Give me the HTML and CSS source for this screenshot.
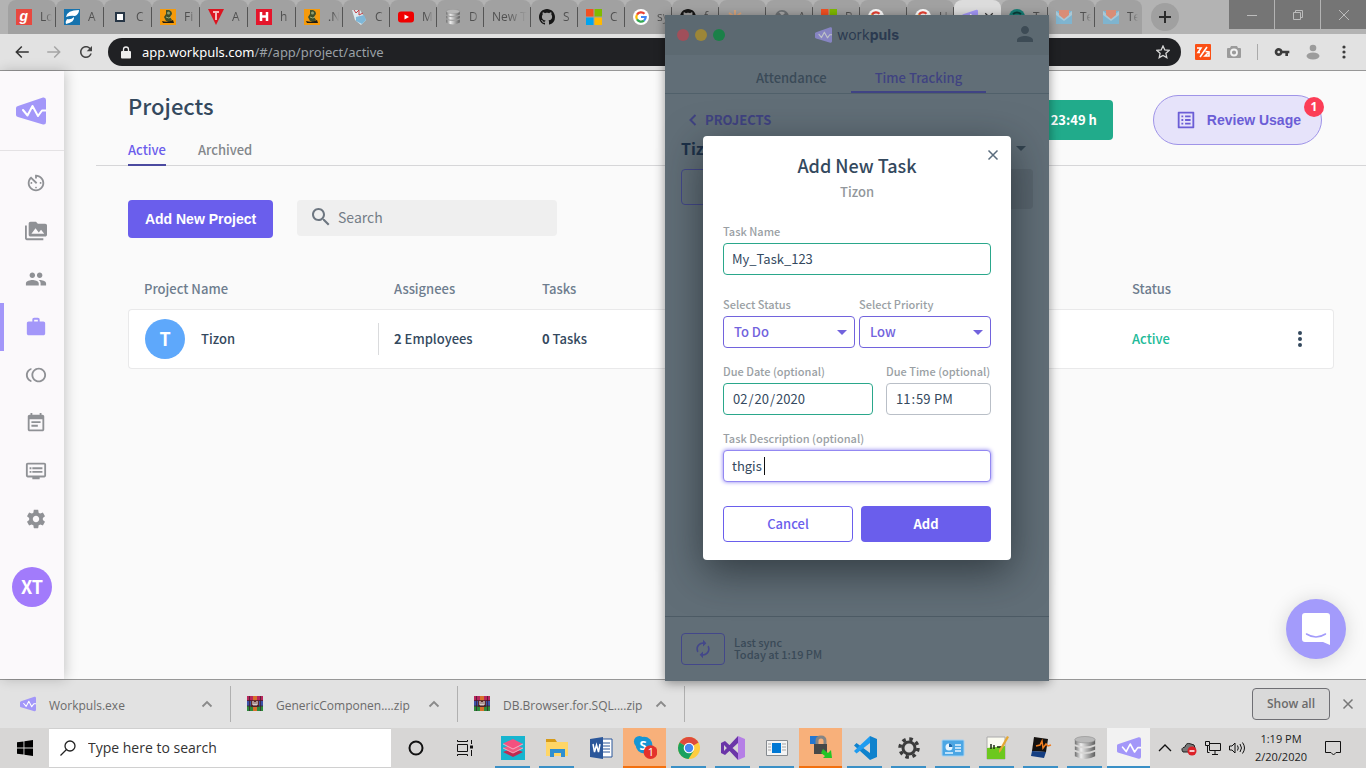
FILE: index.html
```html
<!DOCTYPE html>
<html lang="en">
<head>
<meta charset="utf-8">
<title>Workpuls - Projects</title>
<link rel="stylesheet" href="styles.css">
</head>
<body>
<svg class="sprite" width="0" height="0" aria-hidden="true">
  <symbol id="logo" viewBox="0 0 30 28"><path d="M2 9 27 0.5Q30 0 30 3V25Q30 28 27 27.500L2 20Q0 19.500 0 18V11Q0 9.500 2 9Z" fill="#a397f9"/><path d="M7 13 11.500 18.500 16.500 9 22 19 26 13.500H30" fill="none" stroke="#fff" stroke-width="2" stroke-linejoin="round" stroke-linecap="round"/></symbol>
  <symbol id="google" viewBox="0 0 16 16"><circle cx="8" cy="8" r="8" fill="#fff"/><g fill="none" stroke-width="2.200"><path d="M11.500 4.800A4.700 4.700 0 0 0 4 5.600" stroke="#ea4335"/><path d="M4 5.600A4.700 4.700 0 0 0 4 10.400" stroke="#fbbc05"/><path d="M4 10.400A4.700 4.700 0 0 0 11 11.600" stroke="#34a853"/><path d="M11 11.600A4.700 4.700 0 0 0 12.700 8H8" stroke="#4285f4"/></g></symbol>
  <symbol id="microsoft" viewBox="0 0 16 16"><path d="M0 0h7.500v7.500H0z" fill="#f25022"/><path d="M8.500 0H16v7.500H8.500z" fill="#7fba00"/><path d="M0 8.500h7.500V16H0z" fill="#00a4ef"/><path d="M8.500 8.500H16V16H8.500z" fill="#ffb900"/></symbol>
  <symbol id="github" viewBox="0 0 16 16"><path d="M8 0C3.58 0 0 3.58 0 8c0 3.54 2.29 6.53 5.47 7.59.4.07.55-.17.55-.38 0-.19-.01-.82-.01-1.49-2.01.37-2.53-.49-2.69-.94-.09-.23-.48-.94-.82-1.13-.28-.15-.68-.52-.01-.53.63-.01 1.08.58 1.23.82.72 1.21 1.87.87 2.33.66.07-.52.28-.87.51-1.07-1.78-.2-3.64-.89-3.64-3.95 0-.87.31-1.59.82-2.15-.08-.2-.36-1.02.08-2.12 0 0 .67-.21 2.2.82.64-.18 1.32-.27 2-.27s1.36.09 2 .27c1.53-1.04 2.2-.82 2.2-.82.44 1.1.16 1.92.08 2.12.51.56.82 1.27.82 2.15 0 3.07-1.87 3.75-3.65 3.95.29.25.54.73.54 1.48 0 1.07-.01 1.93-.01 2.2 0 .21.15.46.55.38A8.01 8.01 0 0016 8c0-4.42-3.58-8-8-8z" fill="#161616"/></symbol>
  <symbol id="figure" viewBox="0 0 16 16"><path d="M0 0h16v16H0z" fill="#f59a0b"/><path d="M6 1h3q3 1 3 4l-2 3 2 3-3 2-3-1-2-4 2-3z" fill="#40502a"/><path d="M2 12q6 2 11-1l1 3H3z" fill="#1c1c14"/><circle cx="8.500" cy="4" r="1.500" fill="#8fa070"/><path d="M6 8q3 2 5 0" stroke="#9cae7c" fill="none"/></symbol>
  <symbol id="gmail" viewBox="0 0 16 16"><path d="M0 2h16v13H0z" fill="#7fb4cf"/><path d="M0 2 8 9l8-7v4l-8 6-8-6z" fill="#a8c8d6"/><path d="M3 1h10v5L8 10 3 6z" fill="#d98d76"/></symbol>
  <symbol id="database" viewBox="0 0 24 26"><linearGradient id="metal"><stop offset="0" stop-color="#6d6d6d"/><stop offset=".3" stop-color="#eee"/><stop offset="1" stop-color="#5e5e5e"/></linearGradient><path d="M1 4v5q11 5 22 0V4zM1 11v4q11 5 22 0v-4q-11 5-22 0zM1 17v5q11 6 22 0v-5q-11 5-22 0z" fill="url(#metal)"/><ellipse cx="12" cy="4" rx="11" ry="3.500" fill="#b9b9b9" stroke="#888" stroke-width=".6"/></symbol>
  <symbol id="rar" viewBox="0 0 16 16"><path d="M0 0h16v5H0z" fill="#b8265c"/><path d="M0 5h16v5H0z" fill="#3c51a8"/><path d="M0 10h16v5H0z" fill="#2d8a3a"/><path d="M6 0h4v15H6z" fill="#d8702a"/><path d="M4 5h8v6H4z" fill="#5a2b2b"/><path d="M6 5v4h4V5M8 6v3" stroke="#fff" fill="none"/><path d="M0 4.500h16M0 10h16M2.500 0v15M13.500 0v15" stroke="#3b1a2a" stroke-width=".7"/></symbol>
  <symbol id="gear" viewBox="0 0 24 24"><path d="M19.430 12.980c.04-.32.07-.64.07-.98s-.03-.66-.07-.98l2.110-1.650c.19-.15.24-.42.12-.64l-2-3.460c-.12-.22-.39-.3-.61-.22l-2.490 1c-.52-.4-1.080-.73-1.690-.98l-.38-2.650C14.460 2.180 14.250 2 14 2h-4c-.25 0-.46.18-.49.42l-.38 2.650c-.61.25-1.170.59-1.690.98l-2.490-1c-.23-.09-.49 0-.61.22l-2 3.460c-.13.22-.07.49.12.64l2.110 1.650c-.04.32-.07.65-.07.98s.03.66.07.98l-2.110 1.650c-.19.15-.24.42-.12.64l2 3.460c.12.22.39.3.61.22l2.490-1c.52.4 1.080.73 1.690.98l.38 2.650c.03.24.24.42.49.42h4c.25 0 .46-.18.49-.42l.38-2.650c.61-.25 1.170-.59 1.690-.98l2.490 1c.23.09.49 0 .61-.22l2-3.460c.12-.22.07-.49-.12-.64l-2.110-1.650zM12 15.500c-1.930 0-3.500-1.570-3.500-3.500s1.570-3.500 3.500-3.500 3.500 1.570 3.500 3.500-1.570 3.500-3.500 3.500z"/></symbol>
  <symbol id="person" viewBox="0 0 24 24"><path d="M12 12c2.210 0 4-1.790 4-4s-1.790-4-4-4-4 1.790-4 4 1.790 4 4 4zm0 2c-2.670 0-8 1.340-8 4v2h16v-2c0-2.660-5.330-4-8-4z"/></symbol>
  <symbol id="chevron" viewBox="0 0 12 12"><path d="M1.500 8.500 6 4l4.500 4.500" fill="none" stroke="currentColor" stroke-width="1.800"/></symbol>
  <symbol id="cross" viewBox="0 0 12 12"><path d="M1.500 1.500l9 9M10.500 1.500l-9 9" fill="none" stroke="currentColor" stroke-width="1.500"/></symbol>
</svg>

<header class="browser-head">
  <div class="tabstrip">
    <div class="tabs">
      <div class="tab wide"><svg viewBox="0 0 16 16"><path d="M0 0h16v16H0z" fill="#e8483f"/><text x="3.500" y="12" font-size="14" font-weight="bold" font-style="italic" font-family="Liberation Sans" fill="#fff">g</text></svg><span>Lo</span></div>
      <div class="tab wide"><svg viewBox="0 0 16 16"><path d="M0 0h16v16H0z" fill="#1673ae"/><path d="M2 8Q3 1 15 1q0 4-4 6-4-1-9 1z" fill="#fff"/><path d="M10 8q1 5-8 7-1-2 1-5 4 1 7-2z" fill="#fff"/></svg><span>A</span></div>
      <div class="tab wide"><svg viewBox="0 0 16 16"><path d="M4 4h8v8H4z" fill="#fff" stroke="#263545" stroke-width="2"/></svg><span>C</span></div>
      <div class="tab wide"><svg><use href="#figure"/></svg><span>Fi</span></div>
      <div class="tab wide"><svg viewBox="0 0 16 16"><path d="M0 0h16L8 16z" fill="#dc1420"/><path d="M5 3h6M8 3v8" stroke="#f6b7b9" stroke-width="2"/></svg><span>A</span></div>
      <div class="tab wide"><svg viewBox="0 0 16 16"><path d="M0 0h16v16H0z" fill="#e5152b"/><path d="M5 3v9M11 3v9M5 7.500h6" stroke="#fff" stroke-width="2.500"/></svg><span>h</span></div>
      <div class="tab"><svg><use href="#figure"/></svg><span>.N</span></div>
      <div class="tab"><svg viewBox="0 0 16 16"><path d="M1 1h8l3 5 3 5-5 5-6-5z" fill="#dce8ee"/><path d="M3 1l2 3 3-3v5l4-2" stroke="#c43e42" fill="none"/><path d="M5 8l8-2 2 5-4 4-6-3z" fill="#7eb7d8"/></svg><span>C</span></div>
      <div class="tab"><svg viewBox="0 0 16 16"><rect y="2.500" width="16" height="11" rx="3" fill="#f00000"/><path d="M6.500 5.500v5L11 8z" fill="#fff"/></svg><span>M</span></div>
      <div class="tab"><svg><use href="#database"/></svg><span>D</span></div>
      <div class="tab"><span>New Tab</span></div>
      <div class="tab"><svg><use href="#github"/></svg><span>S</span></div>
      <div class="tab"><svg><use href="#microsoft"/></svg><span>C</span></div>
      <div class="tab"><svg><use href="#google"/></svg><span>sy</span></div>
      <div class="tab"><svg><use href="#github"/></svg><span>f</span></div>
      <div class="tab"><svg viewBox="0 0 16 16"><path d="M8 1v14M2 4l12 8M14 4 2 12" stroke="#d9a47a" stroke-width="2"/></svg><span></span></div>
      <div class="tab"><svg viewBox="0 0 16 16"><circle cx="8" cy="8" r="7" fill="#6c7073"/><path d="M5 3q4-1 6 1l-3 3z" fill="#a8a8a8"/></svg><span>A</span></div>
      <div class="tab"><svg><use href="#microsoft"/></svg><span>B</span></div>
      <div class="tab"><svg><use href="#google"/></svg><span></span></div>
      <div class="tab"><svg><use href="#google"/></svg><span>U</span></div>
      <div class="tab current"><svg><use href="#logo"/></svg><svg class="tab-close"><use href="#cross"/></svg></div>
      <div class="tab"><svg viewBox="0 0 16 16"><circle cx="8" cy="8" r="8" fill="#167d75"/><path d="M4 5q4-3 8 0" stroke="#083b38" stroke-width="2" fill="none"/></svg><span>T</span></div>
      <div class="tab"><svg><use href="#gmail"/></svg><span>Te</span></div>
      <div class="tab last"><svg><use href="#gmail"/></svg><span>Te</span></div>
    </div>
    <button class="newtab" aria-label="New tab"><svg viewBox="0 0 12 12"><path d="M6 0v12M0 6h12" stroke="#2c2c2c" stroke-width="2"/></svg></button>
    <div class="winctl">
      <button aria-label="Minimize"><svg viewBox="0 0 12 12"><path d="M1 6.500h10"/></svg></button>
      <button aria-label="Restore"><svg viewBox="0 0 12 12"><path d="M1.500 3.500h7v7h-7zM3.500 3V1.500h7v7H9"/></svg></button>
      <button aria-label="Close"><svg viewBox="0 0 12 12"><path d="M1 1l10 10M11 1 1 11"/></svg></button>
    </div>
  </div>
  <div class="toolbar">
    <div class="navbtns">
      <button aria-label="Back"><svg viewBox="0 0 24 24" fill="#333"><path d="M21 11H6.830l5.590-5.590L11 4l-8 8 8 8 1.410-1.410L6.830 13H21z"/></svg></button>
      <button aria-label="Forward"><svg viewBox="0 0 24 24" fill="#a5a5a5"><path d="M3 11h14.170l-5.590-5.590L13 4l8 8-8 8-1.410-1.410L17.170 13H3z"/></svg></button>
      <button aria-label="Reload"><svg viewBox="0 0 24 24" fill="#444"><path d="M17.650 6.350C16.200 4.900 14.210 4 12 4c-4.420 0-7.990 3.580-7.990 8s3.570 8 7.990 8c3.730 0 6.840-2.550 7.730-6h-2.080c-.82 2.330-3.040 4-5.650 4-3.310 0-6-2.690-6-6s2.690-6 6-6c1.660 0 3.140.69 4.220 1.780L13 11h7V4l-2.350 2.350z"/></svg></button>
    </div>
    <div class="omnibox">
      <svg class="lock" viewBox="0 0 10 13"><path d="M1 5h8q1 0 1 1v5.500q0 1-1 1H1q-1 0-1-1V6q0-1 1-1z" fill="#eee"/><path d="M2.500 5V3.500a2.500 2.500 0 0 1 5 0V5" fill="none" stroke="#eee" stroke-width="1.300"/></svg>
      <span class="url"><b>app.workpuls.com</b>/#/app/project/active</span>
      <svg class="star" viewBox="0 0 14 14"><path d="M7 1l1.800 4 4.300.4-3.200 2.900.9 4.300L7 10.400l-3.800 2.200.9-4.300L.9 5.400 5.200 5z" fill="none" stroke="#d8d8d8" stroke-width="1.300"/></svg>
    </div>
    <div class="extensions">
      <svg viewBox="0 0 16 16"><rect width="16" height="16" rx="1" fill="#fb4f14"/><path d="M2 4h4L3 8.500h2M12 3 5 13M10.500 7.500 14 8v4h-4l3-3" fill="none" stroke="#fff" stroke-width="1.600"/></svg>
      <svg viewBox="0 0 16 16"><path d="M5 2h6l1 2h2q1 0 1 1v8q0 1-1 1H2q-1 0-1-1V5q0-1 1-1h2z" fill="#9b9b9b"/><circle cx="8" cy="8.500" r="3" fill="none" stroke="#f2f2f2" stroke-width="1.800"/></svg>
      <i class="ext-sep"></i>
      <svg viewBox="0 0 24 24" fill="#3c3c3c"><path d="M12.650 10C11.830 7.670 9.610 6 7 6c-3.310 0-6 2.690-6 6s2.690 6 6 6c2.610 0 4.830-1.670 5.650-4H17v4h4v-4h2v-4H12.650zM7 14c-1.100 0-2-.9-2-2s.9-2 2-2 2 .9 2 2-.9 2-2 2z"/></svg>
      <svg viewBox="0 0 16 16" fill="#9c9c9c"><circle cx="8" cy="4" r="3.300"/><ellipse cx="8" cy="12" rx="6.500" ry="3.500"/></svg>
      <svg viewBox="0 0 16 16" fill="#3c3c3c"><circle cx="8" cy="3" r="1.600"/><circle cx="8" cy="8" r="1.600"/><circle cx="8" cy="13" r="1.600"/></svg>
    </div>
  </div>
</header>

<div class="page">
  <nav class="sidebar" aria-label="Main">
    <a class="brand" href="#" aria-label="Workpuls"><svg><use href="#logo"/></svg></a>
    <a href="#" aria-label="Timer"><svg viewBox="0 0 24 24"><path d="M11 17c0 .55.45 1 1 1s1-.45 1-1-.45-1-1-1-1 .45-1 1zm0-14v4h2V5.080c3.390.49 6 3.390 6 6.920 0 3.870-3.130 7-7 7s-7-3.130-7-7c0-1.680.59-3.220 1.580-4.420L12 13l1.410-1.410-6.800-6.800v.02C4.420 6.450 3 9.050 3 12c0 4.970 4.020 9 9 9 4.970 0 9-4.030 9-9s-4.030-9-9-9h-1zm7 9c0-.55-.45-1-1-1s-1 .45-1 1 .45 1 1 1 1-.45 1-1zM6 12c0 .55.45 1 1 1s1-.45 1-1-.45-1-1-1-1 .45-1 1z"/></svg></a>
    <a href="#" aria-label="Screenshots"><svg viewBox="0 0 24 24"><path d="M2 6H0v5h.01L0 20c0 1.100.9 2 2 2h18v-2H2V6zm20-2h-8l-2-2H6c-1.100 0-1.990.9-1.990 2L4 16c0 1.100.9 2 2 2h16c1.100 0 2-.9 2-2V6c0-1.100-.9-2-2-2zM7 15l4.500-6 3.500 4.510 2.500-3.010L21 15H7z"/></svg></a>
    <a href="#" aria-label="Employees"><svg viewBox="0 0 24 24"><path d="M16 11c1.660 0 2.990-1.340 2.990-3S17.660 5 16 5c-1.660 0-3 1.340-3 3s1.340 3 3 3zm-8 0c1.660 0 2.990-1.340 2.990-3S9.660 5 8 5C6.340 5 5 6.340 5 8s1.340 3 3 3zm0 2c-2.330 0-7 1.170-7 3.500V19h14v-2.500c0-2.330-4.670-3.500-7-3.500zm8 0c-.29 0-.62.02-.97.05 1.160.84 1.970 1.970 1.970 3.450V19h6v-2.500c0-2.330-4.670-3.500-7-3.500z"/></svg></a>
    <a class="on" href="#" aria-label="Projects"><svg viewBox="0 0 24 24"><path d="M20 6h-4V4c0-1.110-.89-2-2-2h-4c-1.110 0-2 .89-2 2v2H4c-1.110 0-1.990.89-1.990 2L2 19c0 1.110.89 2 2 2h16c1.110 0 2-.89 2-2V8c0-1.110-.89-2-2-2zm-6 0h-4V4h4v2z"/></svg></a>
    <a href="#" aria-label="Payroll"><svg viewBox="0 0 24 24"><path d="M15 4c-4.420 0-8 3.580-8 8s3.580 8 8 8 8-3.580 8-8-3.580-8-8-8zm0 14c-3.310 0-6-2.690-6-6s2.690-6 6-6 6 2.690 6 6-2.690 6-6 6zM3 12c0-2.610 1.670-4.830 4-5.650V4.260C3.550 5.150 1 8.270 1 12s2.550 6.850 6 7.740v-2.090c-2.330-.82-4-3.040-4-5.650z"/></svg></a>
    <a href="#" aria-label="Calendar"><svg viewBox="0 0 24 24"><path d="M17 10H7v2h10v-2zm2-7h-1V1h-2v2H8V1H6v2H5c-1.110 0-1.990.9-1.990 2L3 19c0 1.100.89 2 2 2h14c1.100 0 2-.9 2-2V5c0-1.100-.9-2-2-2zm0 16H5V8h14v11zm-5-5H7v2h7v-2z"/></svg></a>
    <a href="#" aria-label="Reports"><svg viewBox="0 0 24 24"><path d="M21 3H3c-1.100 0-2 .9-2 2v12c0 1.100.9 2 2 2h5v2h8v-2h5c1.100 0 1.990-.9 1.990-2L23 5c0-1.100-.9-2-2-2zm0 14H3V5h18v12zm-2-9H8v2h11V8zm0 4H8v2h11v-2zM7 8H5v2h2V8zm0 4H5v2h2v-2z"/></svg></a>
    <a href="#" aria-label="Settings"><svg><use href="#gear"/></svg></a>
    <span class="avatar user">XT</span>
  </nav>

  <main class="main">
    <div class="topbar">
      <div>
        <h1>Projects</h1>
        <div class="subtabs"><a class="on" href="#">Active</a><a href="#">Archived</a></div>
      </div>
      <div class="actions">
        <button class="hours">23:49 h</button>
        <button class="review"><svg viewBox="0 0 24 24"><path d="M19 5v14H5V5h14m1.100-2H3.900c-.5 0-.9.4-.9.9v16.200c0 .4.4.9.9.9h16.200c.4 0 .9-.5.9-.9V3.900c0-.5-.5-.9-.9-.9zM11 7h6v2h-6V7zm0 4h6v2h-6v-2zm0 4h6v2h-6zM7 7h2v2H7zm0 4h2v2H7zm0 4h2v2H7z"/></svg>Review Usage<span class="badge">1</span></button>
      </div>
    </div>
    <div class="content">
      <div class="tools">
        <button class="primary add-project">Add New Project</button>
        <label class="search"><svg viewBox="0 0 24 24"><path d="M15.500 14h-.79l-.28-.27C15.410 12.590 16 11.110 16 9.500 16 5.910 13.090 3 9.500 3S3 5.910 3 9.500 5.910 16 9.500 16c1.610 0 3.090-.59 4.230-1.570l.27.28v.79l5 4.990L20.490 19l-4.990-5zm-6 0C7.010 14 5 11.990 5 9.500S7.010 5 9.500 5 14 7.010 14 9.500 11.990 14 9.500 14z"/></svg><input type="text" placeholder="Search" aria-label="Search"></label>
      </div>
      <table class="projects">
        <thead><tr><th class="c-name">Project Name</th><th class="c-people">Assignees</th><th>Tasks</th><th class="c-status">Status</th><th class="c-more"></th></tr></thead>
        <tbody><tr>
          <td><div class="project"><span class="avatar">T</span>Tizon</div></td>
          <td><div class="people"><b>2</b> Employees</div></td>
          <td class="tasks"><b>0</b> Tasks</td>
          <td class="status">Active</td>
          <td><button class="more" aria-label="More"><svg viewBox="0 0 16 16"><circle cx="8" cy="2" r="2"/><circle cx="8" cy="8" r="2"/><circle cx="8" cy="14" r="2"/></svg></button></td>
        </tr></tbody>
      </table>
    </div>
  </main>
  <button class="chat" aria-label="Chat"><svg viewBox="0 0 28 32"><path d="M3 0h22q3 0 3 3v29l-7-3H3q-3 0-3-3V3q0-3 3-3z" fill="#fff"/><path d="M4.500 21q9.500 6 19 0" fill="none" stroke="#a39bfb" stroke-width="1.500" stroke-linecap="round"/></svg></button>
</div>

<footer class="downloads">
  <div class="download"><svg class="file"><use href="#logo"/></svg><span>Workpuls.exe</span><button aria-label="Options"><svg><use href="#chevron"/></svg></button></div>
  <div class="download"><svg class="file"><use href="#rar"/></svg><span>GenericComponen....zip</span><button aria-label="Options"><svg><use href="#chevron"/></svg></button></div>
  <div class="download"><svg class="file"><use href="#rar"/></svg><span>DB.Browser.for.SQL....zip</span><button aria-label="Options"><svg><use href="#chevron"/></svg></button></div>
  <button class="showall">Show all</button>
  <button class="closebar" aria-label="Close"><svg><use href="#cross"/></svg></button>
</footer>

<div class="taskbar">
  <button class="start" aria-label="Start"><svg viewBox="0 0 16 16"><path d="M0 2.300 6.500 1.400V7.600H0zM7.400 1.300 16 0v7.600H7.400zM0 8.400h6.500v6.200L0 13.700zM7.400 8.400H16V16l-8.600-1.300z"/></svg></button>
  <label class="tasksearch"><svg viewBox="0 0 16 16"><circle cx="10" cy="6" r="5" fill="none" stroke="#222" stroke-width="1.300"/><path d="M6.500 9.500.5 15.500" stroke="#222" stroke-width="1.300"/></svg><input type="text" placeholder="Type here to search" aria-label="Type here to search"></label>
  <button class="sys" aria-label="Cortana"><svg viewBox="0 0 16 16"><circle cx="8" cy="8" r="6.500" fill="none" stroke="#111" stroke-width="2"/></svg></button>
  <button class="sys" aria-label="Task view"><svg viewBox="0 0 16 16" fill="none" stroke="#111"><path d="M.5 4.500h10v7H.5zM.5 0v1.500h10V0M.5 16v-1.500h10V16M14.500 0v4M14.500 10v6"/><path d="M13 5.500h3v3h-3z" fill="#111" stroke="none"/></svg></button>
  <div class="apps">
    <button class="run" aria-label="Layers"><svg viewBox="0 0 24 24"><path d="M0 0h24v24H0z" fill="#17b5cf"/><path d="M2 16l10-4 10 4-10 5z" fill="#c02b52"/><path d="M2 12 12 8l10 4-10 5z" fill="#ef5b80"/><path d="M2 7.500 12 3l10 5-10 5z" fill="#f4517f"/><path d="M2 8l10 5 10-5M2 12l10 5 10-5" stroke="#fbc0d0" fill="none" stroke-width=".8"/></svg></button>
    <button class="run" aria-label="File Explorer"><svg viewBox="0 0 24 24"><path d="M1 3h9l2 3h10v7H1z" fill="#d79b17"/><path d="M1 6h22v14H1z" fill="#ffd666"/><path d="M5 13h15v8h-4v-4H9v4H5z" fill="#2f8fd0"/></svg></button>
    <button aria-label="Word"><svg viewBox="0 0 24 24"><path d="M12 3h11v18H12z" fill="#fff" stroke="#2b579a"/><path d="M14 7h7M14 10h7M14 13h7M14 16h7" stroke="#2b579a"/><path d="M1 3l13-2v22L1 21z" fill="#2b579a"/><path d="M4 8l1.500 8L7.500 9l2 7L11 8" fill="none" stroke="#fff" stroke-width="1.500"/></svg></button>
    <button class="alert" aria-label="Skype"><svg viewBox="0 0 26 26"><circle cx="12" cy="11" r="9" fill="#1696d4"/><circle cx="7" cy="7" r="6" fill="#1696d4"/><text x="7" y="16" font-size="14" font-weight="bold" font-family="Open Sans" fill="#fff">S</text><circle cx="19" cy="18.500" r="7.500" fill="#e4322b"/><text x="16" y="23" font-size="12" font-family="Open Sans" fill="#fff">1</text></svg></button>
    <button class="run" aria-label="Chrome"><svg viewBox="0 0 24 24"><circle cx="12" cy="12" r="11" fill="#ffcd40"/><path d="M12 12 2.500 6.500a11 11 0 0 1 19 0z" fill="#de4a3d"/><path d="M12 12 2.500 6.500A11 11 0 0 0 11.500 23l5-8z" fill="#1aa15f"/><circle cx="12" cy="12" r="5.300" fill="#fff"/><circle cx="12" cy="12" r="4.200" fill="#4688f1"/></svg></button>
    <button class="run" aria-label="Visual Studio"><svg viewBox="0 0 24 24"><path d="M17 0l7 3v18l-7 3z" fill="#b57fe6"/><path d="M17 0v7L4 19l-4-2V7l4-2 13 12v7L3 9v6z" fill="#6b35a8"/></svg></button>
    <button class="run" aria-label="Viewer"><svg viewBox="0 0 24 24"><path d="M1.500 4.500h21v15h-21z" fill="#f4f4f4" stroke="#868b90"/><path d="M7 7h9v10H7z" fill="#0078d4"/><path d="M3 8h3M3 11h3M3 14h3M17 8h4M17 11h4M17 14h4" stroke="#a5a5a5"/></svg></button>
    <button class="alert" aria-label="WinSCP"><svg viewBox="0 0 24 24"><path d="M1 1h8v8H1z" fill="#2576cf"/><path d="M8 11V6q0-4 4-4t4 4v5" fill="none" stroke="#858585" stroke-width="3"/><path d="M5 9h13v10H5z" fill="#484848"/><path d="M14 14l5 4 3-3 1 8h-9l2-2-4-3z" fill="#24c426"/></svg></button>
    <button class="run" aria-label="Visual Studio Code"><svg viewBox="0 0 24 24"><path d="M17 0l7 3v18l-7 3L1 9.500 3.500 7 17 17z" fill="#0f82cd"/><path d="M17 0v7L3.500 17.500 1 15z" fill="#1f9cf0"/></svg></button>
    <button class="run" aria-label="Settings"><svg viewBox="0 0 24 24"><circle cx="12" cy="12" r="6" fill="none" stroke="#3b3b3b" stroke-width="3"/><circle cx="12" cy="12" r="9" fill="none" stroke="#3b3b3b" stroke-width="3.500" stroke-dasharray="3.500 3.570"/></svg></button>
    <button class="run" aria-label="Control Panel"><svg viewBox="0 0 24 24"><rect x="1" y="4" width="22" height="16" rx="1" fill="#4ba6e4" stroke="#a2d1f3"/><circle cx="8" cy="11" r="3.500" fill="#e7f5ff"/><path d="M8 11V7.500a3.500 3.500 0 0 1 3.500 3.500z" fill="#1b6bb0"/><path d="M14 9h6M14 12h6M14 15h6M4 17h8" stroke="#e7f5ff" stroke-width="1.500"/></svg></button>
    <button class="run" aria-label="Notepad++"><svg viewBox="0 0 24 24"><path d="M2 1h18v22H2z" fill="#fbfbf0" stroke="#aaa"/><path d="M2 12l18-2v13H2z" fill="#6cc81e"/><path d="M6 13V8M9 13V9M12 11h5" stroke="#1c2b12" stroke-width="1.500"/><path d="M22 0l2 1-8 14-2 2v-3z" fill="#e4a733"/></svg></button>
    <button class="run" aria-label="Profiler"><svg viewBox="0 0 24 24"><path d="M5 1l14 2-2 13-14-1z" fill="#14110f"/><path d="M3 15l14 1-2 6-13-2z" fill="#163f82"/><path d="M7 10l4-1 2-4 1 7 3-4 2 2 3-1" stroke="#ef7d20" fill="none" stroke-width="1.500"/></svg></button>
    <button class="run" aria-label="Database"><svg><use href="#database"/></svg></button>
    <button class="run front" aria-label="Workpuls"><svg><use href="#logo"/></svg></button>
  </div>
  <div class="tray">
    <svg viewBox="0 0 16 16"><path d="M2 11l6-6 6 6" fill="none" stroke="#111" stroke-width="1.300"/></svg>
    <svg viewBox="0 0 16 16"><path d="M2 12Q-1 8 4 7q1-5 6-3 4 0 4 4v4z" fill="#777" stroke="#222"/><circle cx="11" cy="11" r="4.500" fill="#dc2128"/><path d="M8.500 11h5" stroke="#fff" stroke-width="1.500"/></svg>
    <svg viewBox="0 0 16 16" fill="none" stroke="#111"><path d="M5 3.500h10.500v7H4.500V6M7 14.500h6M10 11v3M.5 1.500h4v4h-4zM2.500 6v6.500h2"/></svg>
    <svg viewBox="0 0 16 16" fill="none" stroke="#111"><path d="M.5 6v4h2.500l3 3V3L3 6zM8.500 5.500q1.500 2.500 0 5M11 4q3 4 0 8M13.500 2.500q4 5.500 0 11"/></svg>
    <div class="clock"><span>1:19 PM</span><span>2/20/2020</span></div>
    <svg class="notice" viewBox="0 0 16 16"><path d="M.5 1.500h15v11H11L8.500 15 6 12.500H.5z" fill="none" stroke="#111"/></svg>
  </div>
</div>

<section class="window" aria-label="Workpuls">
  <div class="window-head">
    <div class="lights"><i class="red"></i><i class="yellow"></i><i class="green"></i></div>
    <div class="wordmark"><svg><use href="#logo"/></svg><span>work<b>puls</b></span></div>
    <div class="account"><svg><use href="#person"/></svg></div>
  </div>
  <div class="window-tabs"><a href="#">Attendance</a><a class="on" href="#">Time Tracking</a></div>
  <div class="window-body">
    <a class="back" href="#"><svg viewBox="0 0 12 12"><path d="M8.500 1 3.500 6l5 5" fill="none" stroke="currentColor" stroke-width="2"/></svg>PROJECTS</a>
    <div class="project-title">Tizon<i class="arrow"></i></div>
    <div class="task-row"><button class="outline" aria-label="Add task"></button><span class="field-bg"></span></div>
  </div>
  <div class="window-foot">
    <button class="outline sync" aria-label="Sync"><svg viewBox="0 0 24 24"><path d="M12 6v3l4-4-4-4v3c-4.420 0-8 3.580-8 8 0 1.570.46 3.030 1.240 4.260L6.700 14.800c-.45-.83-.7-1.790-.7-2.800 0-3.310 2.690-6 6-6zm6.760 1.740L17.300 9.200c.44.84.7 1.790.7 2.800 0 3.310-2.690 6-6 6v-3l-4 4 4 4v-3c4.420 0 8-3.580 8-8 0-1.570-.46-3.030-1.240-4.260z"/></svg></button>
    <div>Last sync<br>Today at 1:19 PM</div>
  </div>

  <form class="modal" role="dialog" aria-labelledby="modal-title">
    <button type="button" class="modal-close" aria-label="Close"><svg><use href="#cross"/></svg></button>
    <h2 id="modal-title">Add New Task</h2>
    <p class="modal-sub">Tizon</p>
    <div class="field"><label for="name">Task Name</label><input class="valid" id="name" type="text" value="My_Task_123"></div>
    <div class="pair selects">
      <div class="field"><label for="status">Select Status</label><div class="select"><select id="status"><option>To Do</option></select></div></div>
      <div class="field"><label for="priority">Select Priority</label><div class="select"><select id="priority"><option>Low</option></select></div></div>
    </div>
    <div class="pair dates">
      <div class="field"><label for="date">Due Date (optional)</label><input class="valid" id="date" type="date" value="2020-02-20"></div>
      <div class="field"><label for="time">Due Time (optional)</label><input id="time" type="time" value="23:59"></div>
    </div>
    <div class="field"><label for="desc">Task Description (optional)</label><div class="caret-box"><input class="focused" id="desc" type="text" value="thgis "><i class="caret"></i></div></div>
    <div class="pair buttons"><button type="button" class="cancel">Cancel</button><button type="button" class="primary">Add</button></div>
  </form>
</section>
</body>
</html>
```
FILE: styles.css
```css
* { box-sizing: border-box; }

body {
  position: relative;
  display: flex;
  flex-direction: column;
  min-height: 100vh;
  margin: 0;
  overflow-x: hidden;
  background: #fafafa;
  color: #34495e;
  font: 13px/16px "Noto Sans CJK SC", "Open Sans", sans-serif;
}

.sprite { position: absolute; }
svg { display: block; flex: none; }
button, input, select { font: inherit; color: inherit; }
button { padding: 0; border: 0; background: none; }
a { color: inherit; text-decoration: none; }

/* Browser chrome */
.tabstrip {
  display: flex;
  height: 34px;
  padding-left: 8px;
  background: #b3b3b3;
  font: 12px/16px "Open Sans", sans-serif;
}
.tabs { display: flex; flex: 0 1 1135px; min-width: 0; }
.tab {
  display: flex;
  flex: 0 1 47px;
  align-items: center;
  gap: 8px;
  min-width: 0;
  padding: 0 4px 0 8px;
  border-radius: 8px 8px 0 0;
  background: linear-gradient(#555, #555) right center / 1px 20px no-repeat #a1a1a1;
  color: #505050;
}
.tab.wide { flex-basis: 48px; }
.tab svg { width: 16px; height: 16px; }
.tab span {
  flex: 1;
  overflow: hidden;
  white-space: nowrap;
  -webkit-mask-image: linear-gradient(90deg, #000 40%, transparent);
  mask-image: linear-gradient(90deg, #000 40%, transparent);
}
.tab.current { gap: 6px; background: #dcdcdc; }
.tab .tab-close { width: 10px; height: 10px; color: #333; }
.tab.last { background: #a1a1a1; }
.newtab {
  display: grid;
  place-items: center;
  width: 28px;
  height: 28px;
  margin: 3px 0 0 8px;
  border-radius: 50%;
  background: #a0a0a0;
}
.newtab svg { width: 12px; height: 12px; }
.winctl { display: flex; gap: 1px; height: 29px; margin-left: auto; }
.winctl button { display: grid; place-items: center; width: 45px; background: #757575; }
.winctl svg { width: 12px; height: 12px; fill: none; stroke: #bcbcbc; }

.toolbar {
  display: flex;
  align-items: center;
  height: 37px;
  border-bottom: 1px solid #979797;
  background: #e2e2e2;
}
.navbtns { display: flex; gap: 14px; width: 108px; padding-left: 13px; }
.navbtns svg { width: 18px; height: 18px; }
.omnibox {
  display: flex;
  flex: 1;
  align-items: center;
  height: 28px;
  padding: 0 11px 0 13px;
  border-radius: 14px;
  background: #202124;
  color: #9aa0a6;
  font: 13px/20px "Noto Sans", sans-serif;
}
.lock { width: 10px; height: 13px; }
.url { flex: 1; padding-left: 11px; }
.url b { color: #fff; font-weight: 400; }
.star { width: 14px; height: 14px; }
.extensions {
  display: flex;
  align-items: center;
  justify-content: space-between;
  width: 185px;
  padding: 0 14px;
}
.extensions svg { width: 16px; height: 16px; }
.ext-sep { width: 1px; height: 16px; background: #aaa; }

/* Page */
.page { position: relative; display: flex; flex: 1; }
.sidebar {
  display: flex;
  flex-direction: column;
  width: 64px;
  background: #fbf9fb;
  box-shadow: 2px 0 12px rgba(0, 0, 0, .2);
}
.sidebar a {
  display: grid;
  place-items: center;
  height: 48px;
  padding-left: 4px;
  border-left: 4px solid transparent;
  fill: #8f9195;
}
.sidebar a svg { width: 22px; height: 22px; }
.sidebar a.on { border-color: #a397f9; fill: #a397f9; }
.sidebar a.brand {
  height: 80px;
  margin-bottom: 8px;
  padding: 0 2px 0 0;
  border-left: 0;
  border-bottom: 1px solid #e4e2e4;
}
.sidebar a.brand svg { width: 30px; height: 28px; }
.avatar {
  display: grid;
  place-items: center;
  width: 40px;
  height: 40px;
  padding-bottom: 2px;
  border-radius: 50%;
  background: #5ea8fb;
  color: #fff;
  font-size: 18px;
  font-weight: 700;
}
.user { margin: 24px 0 0 12px; background: #a27bfb; }

.main { flex: 1; min-width: 0; }
.topbar {
  display: flex;
  justify-content: space-between;
  height: 95px;
  margin-left: 32px;
  padding: 20px 44px 0 32px;
  border-bottom: 1px solid #d6d6d8;
}
h1 { margin: 0; font-size: 22px; line-height: 28px; font-weight: 500; }
.subtabs { display: flex; gap: 32px; margin-top: 22px; font-weight: 500; color: #83878b; }
.subtabs a { padding-bottom: 5px; line-height: 18px; }
.subtabs .on { border-bottom: 2px solid #4b4aa0; color: #6b5dec; }
.actions { display: flex; align-items: flex-start; gap: 40px; padding-top: 4px; }
.hours {
  width: 160px;
  height: 40px;
  margin-top: 5px;
  padding-right: 16px;
  border-radius: 4px;
  background: #21ab8b;
  color: #fff;
  font-weight: 700;
  text-align: right;
}
.review {
  position: relative;
  display: flex;
  align-items: center;
  gap: 10px;
  height: 50px;
  padding: 0 20px 0 21px;
  border: 1px solid #9f94e8;
  border-radius: 25px;
  background: #e6e3fa;
  color: #6b5ed6;
  font: bold 14px/20px "Liberation Sans", sans-serif;
}
.review svg { width: 22px; height: 22px; fill: #6b5ed6; }
.badge {
  position: absolute;
  top: 1px;
  right: -3px;
  width: 20px;
  height: 20px;
  border-radius: 50%;
  background: #fc3d57;
  color: #fff;
  font: bold 12px/20px "Noto Sans", sans-serif;
}
.content { padding: 34px 32px 0 64px; }
.tools { display: flex; align-items: flex-start; gap: 24px; }
.primary { border-radius: 4px; background: #6a5eec; color: #fff; font-weight: 700; }
.add-project { width: 145px; height: 38px; font: bold 14px/20px "Liberation Sans", sans-serif; }
.search {
  display: flex;
  align-items: center;
  gap: 5px;
  width: 260px;
  height: 36px;
  padding: 0 0 2px 12px;
  border-radius: 4px;
  background: #efefef;
}
.search svg { width: 24px; height: 24px; fill: #6d7680; }
.search input { width: 100%; border: 0; background: none; font-size: 14px; }
.search input::placeholder { color: #747d87; opacity: 1; }
.search input, .tasksearch input { min-width: 0; padding: 0; outline: 0; }

.projects { width: 100%; margin-top: 32px; border-spacing: 0; table-layout: fixed; }
.projects th {
  height: 39px;
  padding: 0 16px 2px;
  color: #6e7d8e;
  font-weight: 500;
  text-align: left;
}
.c-name { width: 250px; }
.c-people { width: 148px; }
.c-status { width: 152px; }
.c-more { width: 66px; }
.projects td {
  height: 60px;
  padding: 0;
  border: solid #e9e9ea;
  border-width: 1px 0;
  background: #fff;
  font-weight: 500;
}
.projects td:first-child { border-left-width: 1px; border-radius: 4px 0 0 4px; }
.projects td:last-child { border-right-width: 1px; border-radius: 0 4px 4px 0; }
.project { display: flex; align-items: center; gap: 16px; padding-left: 16px; }
.people { padding: 8px 0 8px 15px; border-left: 1px solid #dadbdd; }
.projects .tasks, .projects .status { padding-left: 16px; }
.status { color: #21ba98; }
.more { display: grid; place-items: center; width: 64px; height: 40px; }
.more svg { width: 16px; height: 16px; fill: #34495e; }
.chat {
  position: absolute;
  right: 20px;
  bottom: 20px;
  display: grid;
  place-items: center;
  width: 60px;
  height: 60px;
  border-radius: 50%;
  background: #a39bfb;
  box-shadow: 0 2px 20px rgba(0, 0, 0, .15);
}
.chat svg { width: 28px; height: 32px; }

/* Downloads */
.downloads {
  display: flex;
  align-items: center;
  height: 49px;
  padding: 0 12px 0 4px;
  border-top: 1px solid #979797;
  background: #e2e2e2;
  color: #6b6b6b;
  font: 12px/18px "Open Sans", sans-serif;
}
.download {
  display: flex;
  align-items: center;
  width: 227px;
  height: 36px;
  padding: 0 17px 0 16px;
  border-right: 1px solid #b0b0b0;
}
.download span { flex: 1; padding: 4px 0 0 13px; white-space: nowrap; }
.file { width: 16px; height: 16px; }
.download button { color: #8a8a8a; }
.download button svg, .closebar svg { width: 12px; height: 12px; }
.showall {
  width: 78px;
  height: 32px;
  margin: 0 12px 0 auto;
  border: 1px solid #6f6f74;
  border-radius: 4px;
  background: #d9d9d9;
  font-weight: 600;
}
.closebar { color: #777; }

/* Taskbar */
.taskbar { display: flex; height: 40px; background: #d7d6d5; font: 14px/18px "Open Sans", sans-serif; color: #222; }
.start { display: grid; place-items: center; width: 49px; }
.start svg, .sys svg { width: 16px; height: 16px; }
.tasksearch {
  display: flex;
  align-items: center;
  gap: 12px;
  width: 342px;
  padding-left: 11px;
  background: #fff;
  border: solid #d0d0d0;
  border-width: 1px 0;
}
.tasksearch svg { width: 16px; height: 16px; }
.tasksearch input { flex: 1; border: 0; background: none; }
.tasksearch input::placeholder { color: #333; opacity: 1; }
.sys { display: grid; place-items: center; width: 49px; }
.apps { display: flex; gap: 1px; margin-left: 2px; }
.apps button {
  display: grid;
  place-items: center;
  width: 43px;
  background: linear-gradient(#3a90c6, #3a90c6) center bottom / 35px 2px no-repeat;
}
.apps button:not(.run) { background: none; }
.apps .alert:not(.run) { border-bottom: 2px solid #f2700f; background: #f8b07a; }
.apps button.front { background-color: #f2f2f2; background-size: 43px 2px; }
.apps svg { width: 24px; height: 24px; }
.tray { display: flex; align-items: center; gap: 8px; margin-left: auto; padding-right: 25px; }
.tray svg { width: 16px; height: 16px; }
.clock { display: grid; width: 56px; text-align: center; font-size: 11px; }
.tray .notice { margin-left: 8px; }

/* Desktop app window */
.window {
  position: absolute;
  top: 15px;
  left: 665px;
  display: flex;
  flex-direction: column;
  width: 384px;
  height: 666px;
  background: #616e77;
  box-shadow: 0 2px 10px rgba(0, 0, 0, .4);
  color: #3a4a57;
}
.window-head {
  display: flex;
  align-items: center;
  height: 40px;
  padding: 0 12px;
  background: #5c6971;
}
.lights { display: flex; flex: 1; gap: 6px; }
.lights i { width: 12px; height: 12px; border-radius: 50%; }
.red { background: #a04f5a; }
.yellow { background: #9c8638; }
.green { background: #1b8048; }
.wordmark { display: flex; align-items: center; gap: 5px; font: 14px/16px Inter, sans-serif; color: #2b3a50; }
.wordmark svg { width: 17px; height: 16px; opacity: .6; }
.account { display: flex; flex: 1; justify-content: flex-end; padding-bottom: 2px; fill: #3d4b55; }
.account svg { width: 24px; height: 24px; }
.window-tabs {
  display: flex;
  height: 39px;
  padding-left: 67px;
  border-bottom: 1px solid #50606a;
  font-weight: 500;
}
.window-tabs a { height: 38px; padding: 15px 24px 0; }
.window-tabs a.on { border-bottom: 2px solid #404384; color: #3f4281; }
.window-body { flex: 1; padding: 18px 16px 0; }
.back { display: flex; align-items: center; gap: 6px; padding-left: 6px; color: #3f4281; font-weight: 700; }
.back svg { width: 12px; height: 12px; }
.project-title {
  display: flex;
  align-items: center;
  justify-content: space-between;
  padding: 7px 7px 8px 0;
  color: #1c3048;
  font-size: 16px;
  line-height: 26px;
  font-weight: 700;
}
.arrow { border: 5px solid transparent; border-top-color: #33434f; border-bottom: 0; }
.task-row { display: flex; }
.outline { border: 1px solid #43478a; border-radius: 4px; }
.task-row .outline { width: 120px; height: 36px; }
.field-bg { flex: 1; height: 40px; border-radius: 4px; background: #59656e; }
.window-foot {
  display: flex;
  align-items: center;
  gap: 9px;
  height: 65px;
  padding: 0 16px;
  border-top: 1px solid #4d5b65;
  font-size: 11px;
  line-height: 12px;
  font-weight: 500;
}
.window-foot div { padding-bottom: 2px; }
.sync { display: grid; place-items: center; width: 44px; height: 32px; }
.sync svg { width: 20px; height: 20px; fill: #43478a; }

/* New task dialog */
.modal {
  position: absolute;
  top: 121px;
  left: 38px;
  width: 308px;
  padding: 15px 20px 18px;
  border-radius: 4px;
  background: #fff;
  box-shadow: 0 12px 40px rgba(20, 26, 32, .6);
  color: #34495e;
}
.modal-close { position: absolute; top: 13px; right: 12px; color: #5a6c7d; }
.modal-close svg { width: 12px; height: 12px; }
.modal h2 { margin: 0; font-size: 18px; line-height: 28px; font-weight: 500; text-align: center; }
.modal-sub { margin: 5px 0 24px; color: #92979c; font-weight: 500; text-align: center; }
.field { display: grid; gap: 5px; }
.field label { color: #9a9fa4; font-size: 11px; line-height: 14px; white-space: nowrap; font-weight: 500; }
.field input, .select select {
  width: 100%;
  height: 32px;
  padding: 0 8px;
  border: 1px solid #b9bfc7;
  border-radius: 4px;
  outline: 0;
  background: #fff;
}
.field input[type="text"] { padding-bottom: 2px; }
.field input.valid { border-color: #2aa78b; }
.field input.focused { border-color: #9388f2; box-shadow: 0 0 4px #8a7ff0; }
.field ::-webkit-calendar-picker-indicator { display: none; }
.pair { display: grid; }
.selects { grid-template-columns: 1fr 1fr; gap: 4px; margin: 22px 0 16px; }
.dates { grid-template-columns: 150px 1fr; gap: 13px; margin-bottom: 16px; }
.buttons { grid-template-columns: 1fr 1fr; gap: 8px; margin-top: 24px; }
.select, .caret-box { position: relative; }
.select select { padding: 0 10px; border-color: #7263dd; appearance: none; color: #7263dd; font-weight: 500; }
.select::after {
  content: "";
  position: absolute;
  top: 14px;
  right: 8px;
  border: 5px solid transparent;
  border-top-color: #7263dd;
  border-bottom: 0;
  pointer-events: none;
}
.caret { position: absolute; top: 7px; left: 41px; width: 1px; height: 18px; background: #111; }
.buttons button { height: 36px; }
.cancel { border: 1px solid #6a5eec; border-radius: 4px; color: #6a5eec; font-weight: 500; }
```
